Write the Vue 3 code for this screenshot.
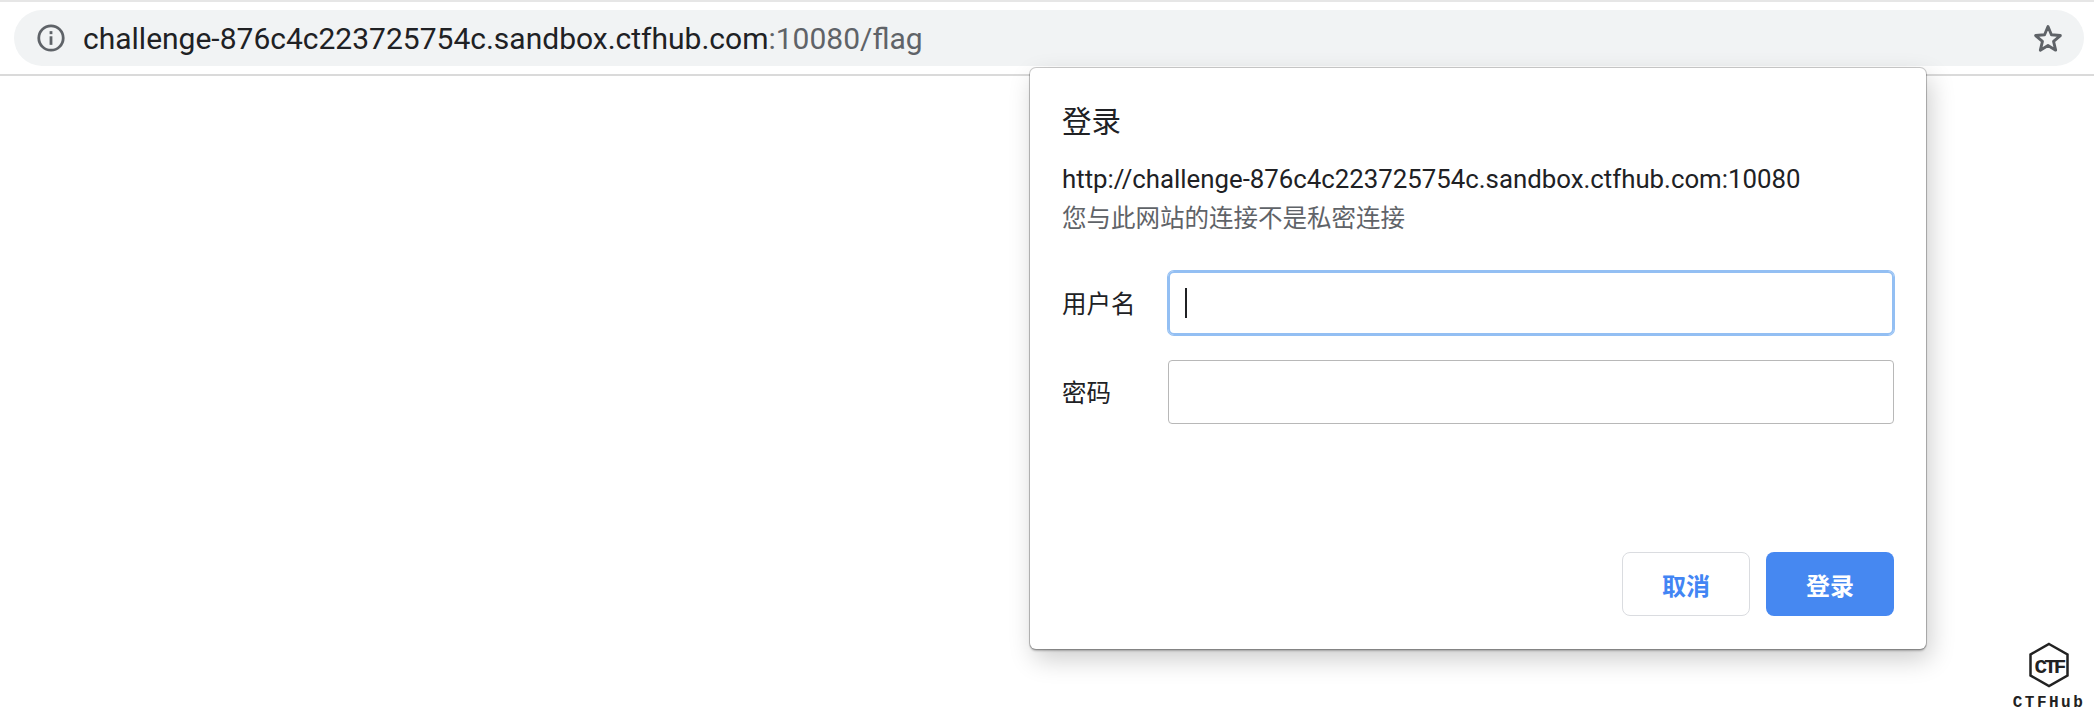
<script setup>
const host = 'challenge-876c4c223725754c.sandbox.ctfhub.com'
const origin = `http://${host}:10080`
</script>

<template>
  <div class="page">
    <header class="toolbar">
      <div class="omnibox">
        <svg class="icon-info" width="30" height="30" viewBox="0 0 28 28" fill="none">
          <circle cx="14" cy="14" r="11.4" stroke="#5f6368" stroke-width="2.6" />
          <rect x="12.7" y="12.4" width="2.6" height="8" fill="#5f6368" />
          <rect x="12.7" y="7.6" width="2.6" height="2.8" fill="#5f6368" />
        </svg>
        <span class="url"><span class="url-host">{{ host }}</span>:10080/flag</span>
        <svg class="icon-star" width="32" height="32" viewBox="0 0 30 30" fill="none">
          <path d="M15 4.2 18.2 12 26.6 12.7 20.2 18.2 22.2 26.4 15 22 7.8 26.4 9.8 18.2 3.4 12.7 11.800 12Z" stroke="#5f6368" stroke-width="2.7" stroke-linejoin="round" />
        </svg>
      </div>
    </header>

    <section class="dialog">
      <h2 class="title">登录</h2>
      <p class="origin">{{ origin }}</p>
      <p class="notice">您与此网站的连接不是私密连接</p>

      <div class="fields">
        <label class="field">
          <span class="field-label">用户名</span>
          <span class="input input-focus"><i class="caret"></i></span>
        </label>
        <label class="field">
          <span class="field-label">密码</span>
          <span class="input"></span>
        </label>
      </div>

      <div class="actions">
        <button class="btn btn-cancel">取消</button>
        <button class="btn btn-login">登录</button>
      </div>
    </section>

    <div class="logo">
      <svg width="42" height="46" viewBox="0 0 42 46" fill="none">
        <path d="M21 2 39.500 12.500V33.500L21 44 2.500 33.500V12.500Z" stroke="#222" stroke-width="2.500" />
        <text x="21" y="30.500" text-anchor="middle" class="logo-mark">CTF</text>
      </svg>
      <span class="logo-text">CTFHub</span>
    </div>
  </div>
</template>

<style scoped>
.page {
  position: relative;
  width: 2094px;
  height: 722px;
  overflow: hidden;
  background: #fff;
  font-family: Roboto, "Noto Sans CJK SC", sans-serif;
}
.toolbar {
  height: 76px;
  box-sizing: border-box;
  padding: 8px 10px 0 14px;
  border-top: 2px solid #e6e6e6;
  border-bottom: 2px solid #dadada;
}
.omnibox {
  display: flex;
  align-items: center;
  height: 56px;
  padding: 0 20px 0 22px;
  border-radius: 28px;
  background: #f1f3f4;
}
.icon-info {
  flex: none;
  margin-right: 17px;
}
.url {
  flex: 1;
  font-size: 30px;
  color: #5f6368;
}
.url-host {
  color: #202124;
}
.icon-star {
  flex: none;
}
.dialog {
  position: absolute;
  left: 1030px;
  top: 68px;
  width: 896px;
  height: 581px;
  box-sizing: border-box;
  padding: 34px 32px 33px;
  display: flex;
  flex-direction: column;
  background: #fff;
  border-radius: 6px;
  box-shadow: 0 0 0 1px rgba(0, 0, 0, 0.2), 0 2px 2px rgba(0, 0, 0, 0.25), 4px 10px 26px rgba(0, 0, 0, 0.2);
}
.title {
  margin: 0;
  font-size: 29.500px;
  line-height: 40px;
  font-weight: 400;
  color: #202124;
}
.origin {
  margin: 17px 0 0;
  font-size: 25.800px;
  line-height: 40px;
  color: #202124;
}
.notice {
  margin: 0;
  font-size: 24.500px;
  line-height: 40px;
  color: #5f6368;
}
.fields {
  margin-top: 32px;
  display: flex;
  flex-direction: column;
  gap: 25px;
}
.field {
  display: flex;
  align-items: center;
}
.field-label {
  width: 106px;
  margin-top: -2px;
  font-size: 24.500px;
  color: #202124;
}
.input {
  flex: 1;
  height: 64px;
  box-sizing: border-box;
  display: flex;
  align-items: center;
  padding-left: 15px;
  border: 1px solid #b8b8b8;
  border-radius: 4px;
}
.input-focus {
  border: 2px solid #93bff3;
  border-radius: 6px;
  box-shadow: 0 0 0 1px #93bff3;
}
.caret {
  width: 2px;
  height: 30px;
  background: #202124;
}
.actions {
  margin-top: auto;
  display: flex;
  justify-content: flex-end;
  gap: 16px;
}
.btn {
  width: 128px;
  height: 64px;
  padding: 0;
  border-radius: 8px;
  font-family: inherit;
  font-size: 24px;
  font-weight: 700;
}
.btn-cancel {
  background: #fff;
  border: 1px solid #dadce0;
  color: #4285f4;
}
.btn-login {
  background: #4688f1;
  border: 0;
  color: #fff;
}
.logo {
  position: absolute;
  right: 5px;
  top: 642px;
  width: 80px;
  display: flex;
  flex-direction: column;
  align-items: center;
}
.logo-mark {
  font-family: "Liberation Mono", monospace;
  font-size: 21px;
  font-weight: 700;
  letter-spacing: -3px;
  fill: #222;
}
.logo-text {
  margin-top: 6px;
  font-family: "Liberation Mono", monospace;
  font-size: 16px;
  line-height: 18px;
  font-weight: 700;
  letter-spacing: 2.500px;
  color: #222;
}
</style>

<style>
html,
body {
  margin: 0;
  background: #fff;
}
</style>
